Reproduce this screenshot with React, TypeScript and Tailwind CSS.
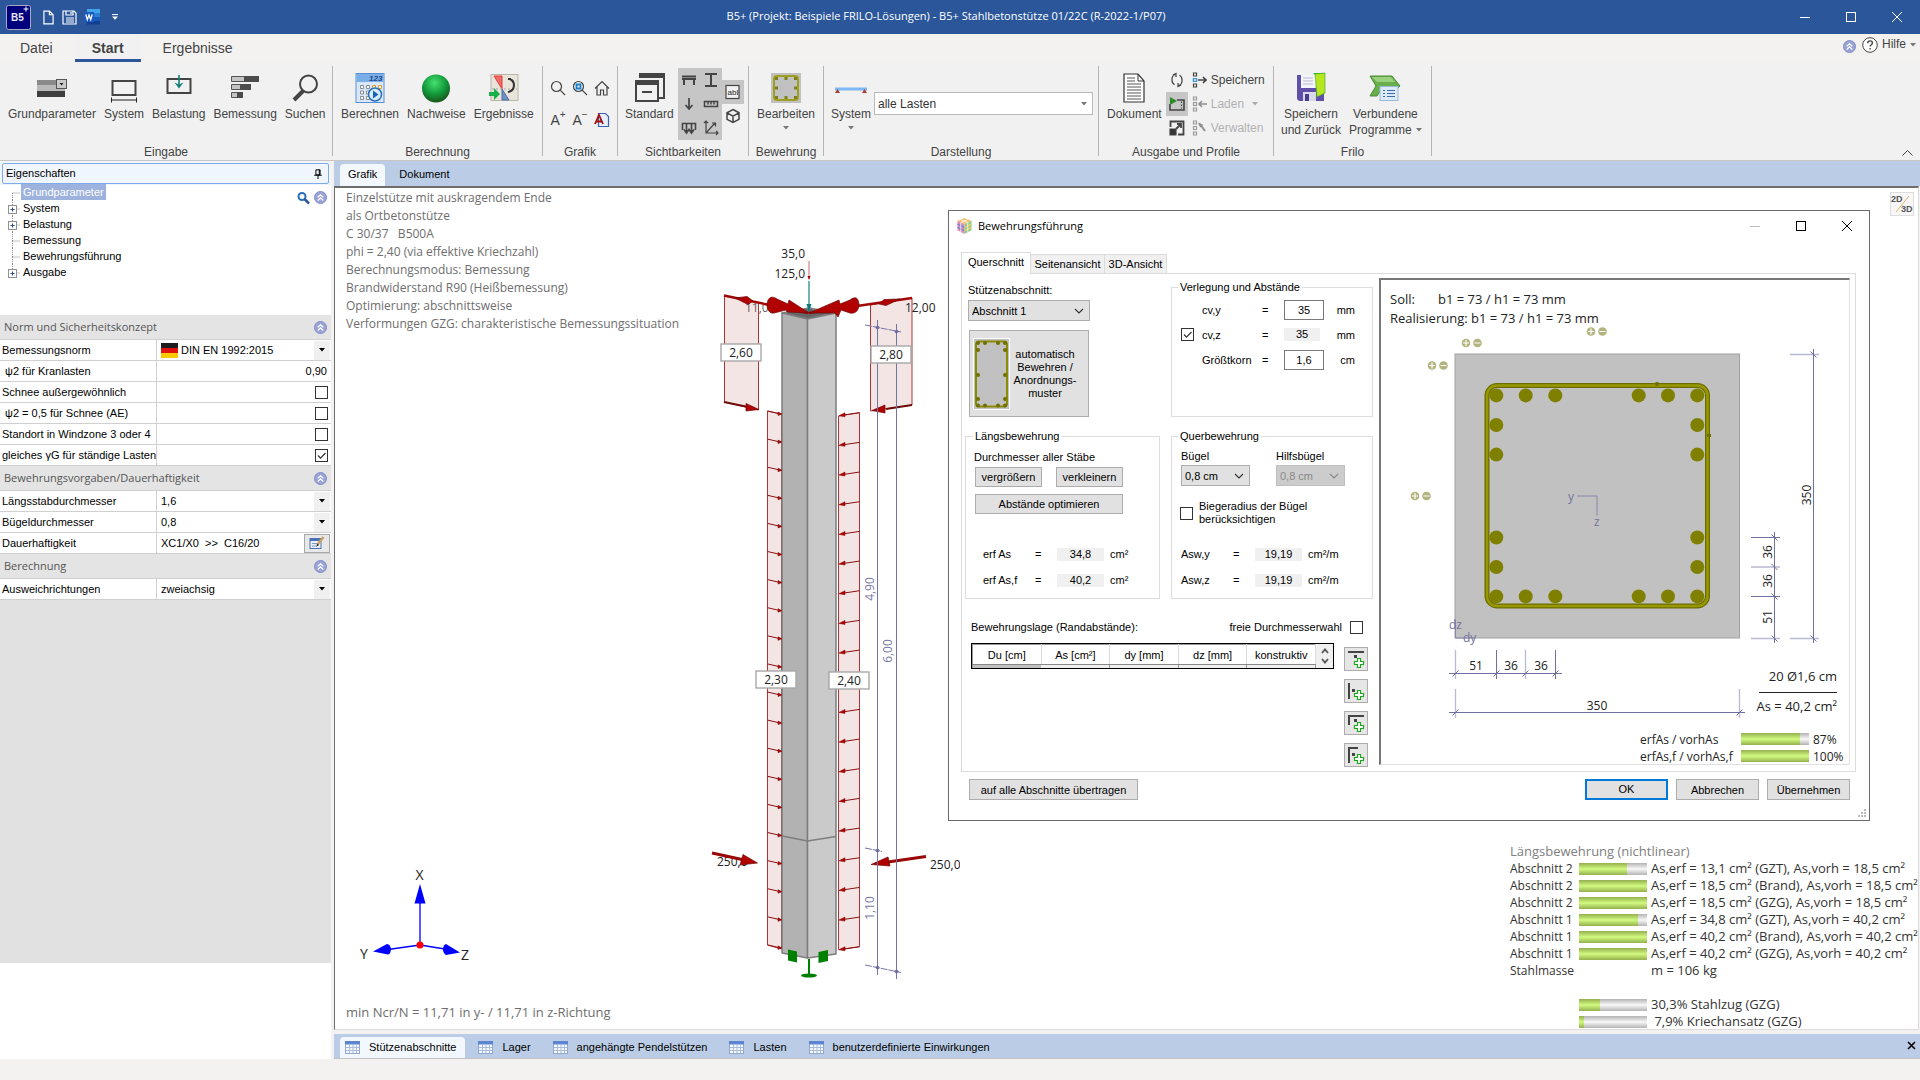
import type { ReactNode } from "react";

/* ---------- small shared pieces ---------- */

function CollapseIcon({ size = 13 }: { size?: number }) {
  return (
    <svg width={size} height={size} viewBox="0 0 14 14">
      <circle cx="7" cy="7" r="6.5" fill="#9aa3d6" stroke="#7f8ac6" strokeWidth="1" />
      <path d="M4 6.8l3-2.8 3 2.8M4 10.2l3-2.8 3 2.8" fill="none" stroke="#fff" strokeWidth="1.3" />
    </svg>
  );
}

function Chevron() {
  return (
    <svg width="10" height="6" viewBox="0 0 10 6" className="pointer-events-none absolute right-1.5">
      <path d="M1 1l4 4 4-4" fill="none" stroke="currentColor" strokeWidth="1.1" />
    </svg>
  );
}

function Caret({ className = "text-[#777]" }: { className?: string }) {
  return (
    <svg width="6" height="4" viewBox="0 0 6 4" className={className}>
      <path d="M0 0h6L3 3.6z" fill="currentColor" />
    </svg>
  );
}

function Check({ id, label, checked }: { id: string; label?: string; checked?: boolean }) {
  return (
    <span className="relative flex h-[13px] w-[13px] shrink-0">
      <input
        id={id}
        type="checkbox"
        aria-label={label}
        defaultChecked={checked}
        className="peer h-[13px] w-[13px] appearance-none border border-[#333] bg-white"
      />
      <svg viewBox="0 0 13 13" className="pointer-events-none absolute inset-0 hidden peer-checked:block">
        <path d="M3 6.5l2.5 2.7L10.5 4" fill="none" stroke="#333" strokeWidth="1.2" />
      </svg>
    </span>
  );
}

function Meter({ value }: { value: number }) {
  return (
    <div className="h-3 w-[68px] bg-linear-to-b from-[#b4b4b4] via-[#f8f8f8] to-[#b4b4b4]">
      <div
        className="h-full bg-linear-to-b from-[#94b04e] via-[#d2fa80] to-[#94b04e]"
        style={{ width: `${value}%` }}
      />
    </div>
  );
}

/* ---------- title bar and ribbon ---------- */

function TitleBar() {
  return (
    <header className="flex h-[34px] shrink-0 items-center bg-[#2b579a] text-white">
      <div className="flex flex-1 items-center pl-1.5">
        <svg width="25" height="25" viewBox="0 0 25 25" className="mr-3">
          <rect x=".5" y=".5" width="24" height="24" rx="2" fill="#00007c" stroke="#a9a9c4" />
          <text x="5" y="16" fontSize="10" fontWeight="700" fill="#e8e8f4" fontFamily="Liberation Sans, sans-serif">B5</text>
          <path d="M20 1.5v5M17.500 4h5" stroke="#fff" strokeWidth="1" />
        </svg>
        <button aria-label="Neu" className="mr-2">
          <svg width="11" height="15" viewBox="0 0 12 16" fill="none" stroke="#fff" strokeWidth="1.3">
            <path d="M1 1h6l4 4v10H1zM7 1v4h4" />
          </svg>
        </button>
        <button aria-label="Speichern" className="mr-[7px]">
          <svg width="15" height="15" viewBox="0 0 15 15" fill="none" stroke="#fff" strokeWidth="1.2">
            <path d="M1 1h11l2 2v11H1zM4 1v4h7V1M9 2v2M4 8h8M4 10h8M4 12h8" />
          </svg>
        </button>
        <button aria-label="Word" className="mr-3">
          <svg width="16" height="16" viewBox="0 0 16 16">
            <path d="M3 0h13v4H3z" fill="#41a5ee" />
            <path d="M3 4h13v4H3z" fill="#2b7cd3" />
            <path d="M3 8h13v4H3z" fill="#185abd" />
            <path d="M3 12h13v3.500H3z" fill="#103f91" />
            <rect y="3" width="10" height="10" fill="#185abd" />
            <path d="M1.800 5.300l1.500 5.400L5 6l1.700 4.700 1.500-5.400" fill="none" stroke="#fff" strokeWidth="1.300" />
          </svg>
        </button>
        <svg width="6" height="6" viewBox="0 0 6 6">
          <path d="M0 .6h6" stroke="#fff" />
          <path d="M0 2.600h6L3 5.800z" fill="#fff" />
        </svg>
      </div>
      <h1 className="pr-4 pb-0.5 font-['Open_Sans',sans-serif] text-[11px] leading-4">
        B5+ (Projekt: Beispiele FRILO-Lösungen) - B5+ Stahlbetonstütze 01/22C (R-2022-1/P07)
      </h1>
      <div className="flex flex-1 items-center justify-end gap-9 pr-[18px]">
        <button aria-label="Minimieren">
          <svg width="10" height="10" viewBox="0 0 10 10"><path d="M0 5.500h10" stroke="#fff" /></svg>
        </button>
        <button aria-label="Maximieren">
          <svg width="10" height="10" viewBox="0 0 10 10"><rect x=".5" y=".5" width="9" height="9" fill="none" stroke="#fff" /></svg>
        </button>
        <button aria-label="Schließen">
          <svg width="10" height="10" viewBox="0 0 10 10"><path d="M0 0l10 10M10 0L0 10" stroke="#fff" /></svg>
        </button>
      </div>
    </header>
  );
}

function RibbonTabs() {
  return (
    <nav className="flex h-7 shrink-0 items-stretch bg-[#f3f2f1] text-sm">
      <a href="#datei" className="px-5 pt-1 text-[#444]">Datei</a>
      <a href="#start" className="ml-0.5 border-b-3 border-[#2b579a] bg-[#f1f1f1] px-[17px] pt-1 font-bold text-[#444]">Start</a>
      <a href="#ergebnisse" className="px-[22px] pt-1 text-[#444]">Ergebnisse</a>
      <div className="flex flex-1 items-start justify-end gap-1.5 pt-0.5 pr-1">
        <button aria-label="Menüband einklappen" className="pt-1"><CollapseIcon /></button>
        <button className="flex items-center gap-1 text-[12px] text-[#444]">
          <svg width="16" height="16" viewBox="0 0 16 16">
            <circle cx="8" cy="8" r="7.300" fill="#fff" stroke="#444" />
            <path d="M5.700 6.200c0-3.200 4.700-3 4.700-.2 0 1.700-2.300 1.800-2.300 3.600M8.100 11v1.500" fill="none" stroke="#444" strokeWidth="1.400" />
          </svg>
          Hilfe <Caret />
        </button>
      </div>
    </nav>
  );
}

function Group({ title, className, children }: { title: string; className: string; children: ReactNode }) {
  return (
    <section className={`flex shrink-0 flex-col ${className}`}>
      <div className="flex flex-1">
        <div className="flex min-w-0 flex-1 flex-col">
          <div className="flex flex-1 items-start">{children}</div>
          <h2 className="text-center text-[12px] leading-4 text-[#444]">{title}</h2>
        </div>
        <div className="my-1 w-px bg-[#b5b5b5]" />
      </div>
    </section>
  );
}

function BigButton({ label, caret, children }: { label: string; caret?: boolean; children: ReactNode }) {
  return (
    <button className="flex flex-col items-center pt-2.5 text-[12px] leading-4 whitespace-nowrap text-[#444]">
      <svg width="32" height="32" viewBox="0 0 32 32">{children}</svg>
      <span className="mt-0.5">{label}</span>
      {caret && <Caret className="mt-1 text-[#777]" />}
    </button>
  );
}

function SmallButton({ label, active, children }: { label: string; active?: boolean; children: ReactNode }) {
  return (
    <button
      aria-label={label}
      className={active ? "flex h-6 w-[22px] items-center justify-center bg-[#c6c6c6]" : "flex h-6 w-[22px] items-center justify-center"}
    >
      <svg width="16" height="16" viewBox="0 0 16 16" fill="none" stroke="#444" strokeWidth="1.2">{children}</svg>
    </button>
  );
}

function ProfileButton({ label, muted, caret, children }: { label: string; muted?: boolean; caret?: boolean; children: ReactNode }) {
  return (
    <button className={muted ? "flex h-6 items-center gap-1 text-[12px] text-[#b1b1b1]" : "flex h-6 items-center gap-1 text-[12px] text-[#444]"}>
      <svg width="15" height="16" viewBox="0 0 15 16" fill="none" stroke="currentColor" strokeWidth="1.2">
        <path d="M1.500 1h3v3h-3zM1.500 6.500h3v3h-3zM1.500 12h3v3h-3z" stroke={muted ? "#9a9a9a" : "#444"} />
        {children}
      </svg>
      {label}
      {caret && <Caret className="ml-1 text-[#aaa]" />}
    </button>
  );
}

function Ribbon() {
  return (
    <div className="flex h-[99px] shrink-0 border-b border-[#c8c6c4] bg-[#f1f1f1]">
      <Group title="Eingabe" className="w-[333px]">
        <div className="flex gap-2 pl-2">
          <BigButton label="Grundparameter">
            <path d="M1 8h20v6H1z" fill="#8a8a8a" />
            <path d="M1 13h28v6H1z" fill="#b9b9b9" />
            <path d="M1 19h28v6H1z" fill="#3f3f3f" />
            <rect x="20.500" y="7.500" width="10" height="9" fill="#c9c9c9" stroke="#555" />
            <path d="M23.500 11h4l-2 2.500z" fill="#222" />
          </BigButton>
          <BigButton label="System">
            <rect x="4.500" y="9" width="23" height="14" fill="none" stroke="#444" strokeWidth="2" />
            <path d="M3.500 25.500v5M28.500 25.500v5M3.500 28h25" fill="none" stroke="#222" />
          </BigButton>
          <BigButton label="Belastung">
            <rect x="4.500" y="7" width="23" height="14" fill="none" stroke="#444" strokeWidth="2" />
            <path d="M16 3v11" stroke="#138080" strokeWidth="1.600" />
            <path d="M11.500 10.500l4.500 6 4.500-6-4.500 2z" fill="#138080" />
          </BigButton>
          <BigButton label="Bemessung">
            <path d="M2.500 4.500h13v5h-13zM2.500 12.500h9v5h-9zM2.500 20.500h6v5h-6z" fill="#c4c4c4" stroke="#555" />
            <path d="M15 4h15v6H15zM11 12h11v6H11zM8 20h6v6H8z" fill="#4c4c4c" />
          </BigButton>
          <BigButton label="Suchen">
            <circle cx="19.500" cy="12" r="8.500" fill="none" stroke="#444" strokeWidth="2" />
            <path d="M14 19L5 28" stroke="#444" strokeWidth="4" />
          </BigButton>
        </div>
      </Group>

      <Group title="Berechnung" className="w-[210px]">
        <div className="flex gap-2 pl-2">
          <BigButton label="Berechnen">
            <rect x="2" y="1.500" width="28" height="29" fill="#d8e8fa" stroke="#5c8fd0" />
            <path d="M2.500 2h27v8h-27z" fill="#7aaee8" />
            <text x="15" y="9" fontSize="8" fontStyle="italic" fontWeight="700" fill="#234a8c" fontFamily="Liberation Sans, sans-serif">123</text>
            <path d="M6.500 13.500h3v3h-3zM12.500 13.500h3v3h-3zM6.500 19h3v3h-3zM12.500 19h3v3h-3zM6.500 24.500h3v3h-3zM12.500 24.500h3v3h-3z" fill="#fff" stroke="#8d8d8d" />
            <path d="M18.500 13.500h3v3h-3zM24.500 13.500h3v3h-3z" fill="#fff" stroke="#e39a2d" />
            <circle cx="21" cy="22.500" r="6.500" fill="#d5ecfb" stroke="#2f6fb5" strokeWidth="1.500" />
            <path d="M19 18.500l5.500 4-5.500 4z" fill="#1a63b0" />
          </BigButton>
          <BigButton label="Nachweise">
            <defs>
              <radialGradient id="ball" cx=".45" cy=".3" r=".75">
                <stop offset="0" stopColor="#45e070" />
                <stop offset=".55" stopColor="#12983a" />
                <stop offset="1" stopColor="#1d4a16" />
              </radialGradient>
            </defs>
            <circle cx="16" cy="16.500" r="14" fill="url(#ball)" />
          </BigButton>
          <BigButton label="Ergebnisse">
            <rect x="3" y="2.500" width="27" height="26" fill="#e9e4da" stroke="#bbb5a8" />
            <path d="M6 4h8v13z" fill="#f06a6a" stroke="#e53b3b" />
            <path d="M14 17v11h7z" fill="#6f8fc0" stroke="#4f70a8" />
            <path d="M4 17h25" stroke="#aaa" strokeDasharray="2 2" />
            <path d="M22 7c6 3 5 12-2 13M20 7h3" fill="none" stroke="#333" strokeWidth="2" />
            <path d="M1 20h5v-4l6 6-6 6v-4H1z" fill="#18b04b" />
          </BigButton>
        </div>
      </Group>

      <Group title="Grafik" className="w-[75px]">
        <div className="grid grid-cols-3 gap-y-2 pt-3.5 pl-1">
          <SmallButton label="Zoom"><circle cx="6.500" cy="6.500" r="5" /><path d="M10.200 10.200L15 15" /></SmallButton>
          <SmallButton label="Zoom Fenster">
            <circle cx="6.500" cy="6.500" r="5" /><path d="M10.200 10.200L15 15" />
            <path d="M4.500 4.500h4v4h-4z" stroke="#1b80d0" strokeWidth="1.800" />
          </SmallButton>
          <SmallButton label="Alles"><path d="M1 8.500L8 1.500l7 7M3 7v8h3.500v-5h3v5H13V7" /></SmallButton>
          <button aria-label="Schrift größer" className="flex h-6 w-[22px] items-center justify-center text-[14px] text-[#444]">A<sup className="text-[10px]">+</sup></button>
          <button aria-label="Schrift kleiner" className="flex h-6 w-[22px] items-center justify-center text-[14px] text-[#444]">A<sup className="text-[10px]">−</sup></button>
          <SmallButton label="Schriftart">
            <path d="M4.500 1.500h7l3 3v10h-10z" fill="#e6effa" stroke="#3d62a8" />
            <path d="M1 12L5 3l4 9M2.500 9.500h5" stroke="#a01010" strokeWidth="1.800" />
          </SmallButton>
        </div>
      </Group>

      <Group title="Sichtbarkeiten" className="w-[131px]">
        <div className="pl-[7px]">
          <BigButton label="Standard">
            <path d="M7 2h24v24H26" fill="none" stroke="#444" strokeWidth="2" />
            <path d="M6 1h25v5H6z" fill="#444" />
            <rect x="3" y="9" width="22" height="20" fill="#f1f1f1" stroke="#444" strokeWidth="2" />
            <path d="M2 8h24v5H2z" fill="#444" />
            <path d="M9 20h10" stroke="#444" strokeWidth="2" />
          </BigButton>
        </div>
        <div className="ml-1 grid grid-cols-2 pt-1.5">
          <SmallButton label="Träger" active><path d="M1 4.500h14M1 7h14M3 7v6M13 7v6" strokeWidth="2" /></SmallButton>
          <SmallButton label="Querschnitt" active><path d="M2 2h12M8 2v12M2 14h12" strokeWidth="2" /></SmallButton>
          <SmallButton label="Lasten" active><path d="M8 2v11M4.500 9L8 13l3.500-4" strokeWidth="1.700" /></SmallButton>
          <SmallButton label="Bemaßung" active><path d="M1.500 5.500h13v5h-13zM5 5.500v3M8 5.500v3M11 5.500v3" strokeWidth="1.500" /></SmallButton>
          <SmallButton label="Auflager" active><path d="M1.500 10V3.500h13V10M5.500 4v8M10.500 4v8M3 9.500L5.500 13 8 9.500l2.500 3.500L13 9.500" strokeWidth="1.600" /></SmallButton>
          <SmallButton label="Achsen" active><path d="M3 1v12h12M3 13L12 3M9 3h3.500v3.500M1 3l2-2 2 2M13 11l2 2-2 2" /></SmallButton>
        </div>
        <div className="flex flex-col pt-[18px]">
          <SmallButton label="Beschriftung" active>
            <rect x="1" y="1.500" width="13" height="13" fill="#f1f1f1" />
            <text x="2.500" y="11" fontSize="8" stroke="none" fill="#222" fontFamily="Liberation Sans, sans-serif">abl</text>
          </SmallButton>
          <SmallButton label="3D"><path d="M8 1.500l6 3.300v6.500L8 14.500l-6-3.200V4.800zM2 4.800l6 3.400 6-3.400M8 8.200v6.300" strokeWidth="1.500" /></SmallButton>
        </div>
      </Group>

      <Group title="Bewehrung" className="w-[75px]">
        <div className="pl-2">
          <BigButton label="Bearbeiten" caret>
            <path d="M1 1h30v30H1z" fill="#c1c1c1" />
            <rect x="4" y="4" width="24" height="24" rx="3" fill="none" stroke="#a0a020" strokeWidth="2" />
            <path d="M5 5h3v3H5zM24 5h3v3h-3zM5 24h3v3H5zM24 24h3v3h-3zM14.500 5h3v3h-3zM14.500 24h3v3h-3zM5 14.500h3v3H5zM24 14.500h3v3h-3z" fill="#80801a" />
          </BigButton>
        </div>
      </Group>

      <Group title="Darstellung" className="w-[275px]">
        <div className="flex items-start gap-[3px] pl-[7px]">
          <BigButton label="System" caret>
            <path d="M0 17h32" stroke="#7db8f5" strokeWidth="3" />
            <path d="M0 21l2.500-4 2.500 4zM27 21l2.500-4 2.500 4z" fill="#b03a2e" />
          </BigButton>
          <div className="relative mt-[30px] flex items-center">
            <select aria-label="Lasten" className="h-[23px] w-[219px] appearance-none border border-[#b9b9b9] bg-white px-[3px] text-[12px] text-[#333]">
              <option>alle Lasten</option>
            </select>
            <Caret className="pointer-events-none absolute right-1.5 text-[#777]" />
          </div>
        </div>
      </Group>

      <Group title="Ausgabe und Profile" className="w-[175px]">
        <div className="pl-2">
          <BigButton label="Dokument">
            <path d="M6 2h14l6 7v21H6z" fill="#fff" stroke="#333" strokeWidth="1.200" />
            <path d="M20 2v7h6" fill="none" stroke="#333" />
            <path d="M9 6h8M9 9h8M9 12h14M9 15h14M9 18h14M9 21h14M9 24h14M9 27h14" stroke="#555" />
          </BigButton>
        </div>
        <div className="flex flex-col pt-1.5 pl-1">
          <SmallButton label="Aktualisieren"><path d="M6 2.500C2 4 2 11 5.500 12.800M10 13.500C14 12 14 5 10.500 3.200M4 3l3-1.500V5M12 13l-3 1.500V11" /></SmallButton>
          <SmallButton label="Vorschau" active>
            <path d="M1 8v6h14V4H8" strokeWidth="1.600" />
            <path d="M12.500 5.500v7" strokeDasharray="1.500 1.500" />
            <path d="M1 1l7 4-7 4z" fill="#2b8a2b" stroke="none" />
          </SmallButton>
          <SmallButton label="Vergrößern">
            <path d="M1.500 7V1.500h13v13H9" strokeWidth="1.800" /><path d="M1 9h6v6H1z" fill="#333" /><path d="M7 9l5-5M8 4h4v4" strokeWidth="1.800" />
          </SmallButton>
        </div>
        <div className="flex flex-col pt-1.5 pl-1">
          <ProfileButton label="Speichern"><path d="M6 8h8M11 5l3 3-3 3" strokeWidth="1.600" /><path d="M1.500 6.500h3v3h-3z" stroke="#2b9fe0" /></ProfileButton>
          <ProfileButton label="Laden" muted caret><path d="M7 8h8M10 5L7 8l3 3" stroke="#8f8f8f" strokeWidth="1.600" /></ProfileButton>
          <ProfileButton label="Verwalten" muted><path d="M8 4l5 7M7 3l1.500 3 2-1.500" stroke="#8f8f8f" strokeWidth="2" /></ProfileButton>
        </div>
      </Group>

      <Group title="Frilo" className="w-[158px]">
        <div className="flex gap-2 pl-[7px]">
          <button className="flex flex-col items-center pt-2.5 text-[12px] leading-4 text-[#444]">
            <svg width="32" height="32" viewBox="0 0 32 32">
              <path d="M2 3h27v26H4l-2-2z" fill="#5f4fa8" />
              <path d="M6 3h15v13H6z" fill="#f4f4fb" />
              <path d="M8 6h10M8 9h10M8 12h10" stroke="#b9b9d4" />
              <path d="M8 20h13v9H8z" fill="#d9d9ea" />
              <path d="M10 22h4v7h-4z" fill="#4a3c90" />
              <path d="M18 1h12v20l-6 2V6z" fill="#1fb53a" />
              <path d="M20 2l10-1v20l-8 4z" fill="#b6e61d" stroke="#3aa028" strokeWidth=".6" />
            </svg>
            <span className="mt-0.5">Speichern</span>
            <span>und Zurück</span>
          </button>
          <button className="flex flex-col items-center pt-2.5 text-[12px] leading-4 text-[#444]">
            <svg width="32" height="32" viewBox="0 0 32 32">
              <path d="M1 4h22l8 10-4 4H12l-4 6H1l6-10z" fill="#69b04a" stroke="#4a8a34" />
              <path d="M3 5h19l4 5H8z" fill="#9ad07e" />
              <rect x="11" y="14.500" width="18" height="14" fill="#dbe9f8" stroke="#9ab8da" />
              <path d="M14 18.500h2M14 21.500h2M14 24.500h2M18 18.500h8M18 21.500h8M18 24.500h8" stroke="#3c6ca8" />
            </svg>
            <span className="mt-0.5">Verbundene</span>
            <span className="flex items-center gap-1">Programme <Caret /></span>
          </button>
        </div>
      </Group>

      <div className="flex flex-1 items-end justify-end pr-[7px] pb-1">
        <button aria-label="Menüband reduzieren">
          <svg width="11" height="6" viewBox="0 0 11 6"><path d="M.5 5.500l5-5 5 5" fill="none" stroke="#444" /></svg>
        </button>
      </div>
    </div>
  );
}

/* ---------- properties panel ---------- */

const tree = [
  { name: "Grundparameter", selected: true },
  { name: "System", children: true },
  { name: "Belastung", children: true },
  { name: "Bemessung" },
  { name: "Bewehrungsführung" },
  { name: "Ausgabe", children: true },
];

function Section({ title }: { title: string }) {
  return (
    <div className="flex h-[25px] items-center justify-between border-b border-[#d0d0d0] bg-[#e4e4e4] pr-1 pl-1">
      <h3 className="font-['Open_Sans',sans-serif] text-[11px] text-[#555]">{title}</h3>
      <button aria-label={`${title} einklappen`}><CollapseIcon /></button>
    </div>
  );
}

function Row({ id, label, children }: { id: string; label: string; children: ReactNode }) {
  return (
    <div className="flex h-[21px] border-b border-[#d0d0d0] bg-white">
      <label htmlFor={id} className="w-[156px] shrink-0 pl-0.5 leading-5 whitespace-pre">{label}</label>
      <div className="flex min-w-0 flex-1 items-center border-l border-[#d0d0d0]">{children}</div>
    </div>
  );
}

function RowSelect({ id, value, flag }: { id: string; value: string; flag?: boolean }) {
  return (
    <div className="flex h-full w-full items-center pl-1">
      {flag && (
        <svg width="17" height="15" viewBox="0 0 17 15" className="mr-[3px] shrink-0">
          <path d="M0 0h17v5H0z" fill="#1c1c1c" />
          <path d="M0 5h17v5H0z" fill="#dd1010" />
          <path d="M0 10h17v5H0z" fill="#f8c800" />
        </svg>
      )}
      <select id={id} className="min-w-0 flex-1 appearance-none bg-transparent pt-px"><option>{value}</option></select>
      <span className="mr-px flex h-[19px] w-4 items-center justify-center bg-[#f0f0f0]"><Caret className="text-black" /></span>
    </div>
  );
}

function Properties() {
  return (
    <aside className="flex w-[331px] shrink-0 flex-col bg-[#f0f5fc] text-[11px] text-black">
      <div className="mx-0.5 mt-0.5 mb-px flex h-[21px] items-center justify-between rounded-xs border border-[#7fabe8] bg-[#eff6fe] pr-1.5 pl-[3px]">
        <h2>Eigenschaften</h2>
        <svg width="8" height="10" viewBox="0 0 9 12" fill="none" stroke="#000" strokeWidth="1.200">
          <path d="M2 1h5v6H2zM0 7.500h9M4.500 8v4M6 1v6" />
        </svg>
      </div>
      <div className="flex h-[130px] shrink-0 justify-between bg-white">
        <ul className="-mt-px">
          {tree.map((item) => (
            <li key={item.name} className="flex h-4 items-center">
              <svg width="21" height="16" viewBox="0 0 21 16">
                <path d="M12.500 9v-9M12.500 9h8" stroke="#888" strokeDasharray="1 1" className={item.selected ? "hidden" : ""} />
                <path d="M12.500 9v7" stroke="#888" strokeDasharray="1 1" className={item.name === "Ausgabe" ? "hidden" : ""} />
                {item.selected && <path d="M12.500 9h8" stroke="#888" strokeDasharray="1 1" />}
                {item.children && (
                  <g>
                    <rect x="8.500" y="5.500" width="8" height="8" fill="#fff" stroke="#919191" />
                    <path d="M10.500 9.500h4M12.500 7.500v4" stroke="#2a4a9a" />
                  </g>
                )}
              </svg>
              <span className={item.selected ? "bg-[#9db2dc] pr-0.5 pl-0.5 leading-4 text-white" : "pl-0.5 leading-4"}>{item.name}</span>
            </li>
          ))}
        </ul>
        <div className="flex items-start gap-1 pt-1.5 pr-1">
          <button aria-label="Suchen">
            <svg width="13" height="14" viewBox="0 0 13 14">
              <circle cx="5" cy="5.500" r="3.500" fill="none" stroke="#2a6cb8" strokeWidth="2" />
              <path d="M7.500 8l4.500 4.500" stroke="#2a5a9c" strokeWidth="2.500" />
            </svg>
          </button>
          <button aria-label="Alle einklappen"><CollapseIcon /></button>
        </div>
      </div>

      <Section title="Norm und Sicherheitskonzept" />
      <Row id="norm" label="Bemessungsnorm"><RowSelect id="norm" value="DIN EN 1992:2015" flag /></Row>
      <Row id="kran" label=" ψ2 für Kranlasten"><input id="kran" defaultValue="0,90" className="w-full pr-1 text-right" /></Row>
      <Row id="schnee" label="Schnee außergewöhnlich"><div className="ml-auto pr-[3px]"><Check id="schnee" /></div></Row>
      <Row id="ae" label=" ψ2 = 0,5 für Schnee (AE)"><div className="ml-auto pr-[3px]"><Check id="ae" /></div></Row>
      <Row id="wind" label="Standort in Windzone 3 oder 4"><div className="ml-auto pr-[3px]"><Check id="wind" /></div></Row>
      <Row id="gamma" label="gleiches γG für ständige Lasten"><div className="ml-auto pr-[3px]"><Check id="gamma" checked /></div></Row>

      <Section title="Bewehrungsvorgaben/Dauerhaftigkeit" />
      <Row id="laengs" label="Längsstabdurchmesser"><RowSelect id="laengs" value="1,6" /></Row>
      <Row id="buegel" label="Bügeldurchmesser"><RowSelect id="buegel" value="0,8" /></Row>
      <Row id="dauer" label="Dauerhaftigkeit">
        <input id="dauer" defaultValue="XC1/X0  >>  C16/20" className="min-w-0 flex-1 pl-1" />
        <button aria-label="Dauerhaftigkeit bearbeiten" className="mr-px flex h-[19px] w-[26px] items-center justify-center border border-[#a8a8a8] bg-[#e8e8e8]">
          <svg width="16" height="14" viewBox="0 0 16 14">
            <rect x="1" y="2.500" width="11" height="10" fill="#eaf1fb" stroke="#4a72b8" />
            <path d="M1 2.500h11v2.500H1z" fill="#4a72b8" />
            <path d="M3 7.500h5M3 10h4" stroke="#7a9bd0" />
            <path d="M14.500 1L8 9" stroke="#c8a060" strokeWidth="2.500" />
            <path d="M8.500 7.500L7 11l3-2z" fill="#333" />
          </svg>
        </button>
      </Row>

      <Section title="Berechnung" />
      <Row id="ausweich" label="Ausweichrichtungen"><RowSelect id="ausweich" value="zweiachsig" /></Row>
      <div className="flex-1 bg-[#e1e1e1]" />
      <div className="h-24 bg-white" />
    </aside>
  );
}

/* ---------- 3D view of the column ---------- */

const leftLoads = Array.from({ length: 20 }, (_, i) => 411 + i * 28.1);
const rightLoads = Array.from({ length: 19 }, (_, i) => 412.7 + i * 29.67);

function LoadLabel({ x, y, text }: { x: number; y: number; text: string }) {
  return (
    <g>
      <rect x={x} y={y} width="40" height="17" fill="#fff" stroke="#a8a8a8" strokeWidth="1.400" />
      <text x={x + 20} y={y + 13} textAnchor="middle">{text}</text>
    </g>
  );
}

function ColumnView() {
  return (
    <svg
      className="absolute top-[52px] left-[15px] h-[750px] w-[610px] font-['Open_Sans',sans-serif] text-[12px]"
      viewBox="350 240 610 750"
      fill="#222"
    >
      {/* area loads */}
      <g fill="#f4e5e5" stroke="#b03434" strokeWidth="1">
        <path d="M724.500 296l34 7v107l-34-8z" />
        <path d="M870.500 305l41.500-7v107l-41.500 6z" />
        <path d="M767.500 411l14 3v535l-14-4z" />
        <path d="M838.500 416l21-3.300v534l-21 3z" />
      </g>

      {/* labels that lie behind the arrows */}
      <text x="745" y="312" fill="#666">11,00</text>
      <text x="905" y="312">12,00</text>
      <text x="717" y="866">250,0</text>
      <text x="930" y="869">250,0</text>
      <text x="805" y="258" textAnchor="end">35,0</text>
      <text x="805" y="278" textAnchor="end">125,0</text>

      {/* column body */}
      <g stroke="#7e7e7e" strokeWidth="1.500" strokeLinejoin="round">
        <path d="M782 313l27-5 27 5-28.500 6z" fill="#666" />
        <path d="M782 313l25.500 6v639L782 953z" fill="#b2b2b2" />
        <path d="M836 313l-28.500 6v639l28.500-4z" fill="#cacaca" />
        <path d="M782 836l25.500 5 28.500-4.500" fill="none" />
      </g>

      {/* wind load arrows */}
      <g stroke="#8a1010" fill="#b00000">
        {leftLoads.map((y) => (
          <g key={y}>
            <path d={`M767.500 ${y}l13 3`} />
            <path d={`M778 ${y + 1}l4 2-4 1.500z`} strokeWidth=".6" />
          </g>
        ))}
        {rightLoads.map((y) => (
          <g key={y}>
            <path d={`M859.500 ${y}l-18 2.700`} />
            <path d={`M839 ${y + 3}l6-3v4z`} strokeWidth=".6" />
          </g>
        ))}
      </g>

      {/* large red arrows */}
      <g fill="#b00000" stroke="#6e0a0a" strokeWidth=".7">
        <path d="M724 295.500l84 17.500" strokeWidth="2.400" stroke="#a00808" />
        <path d="M912 298l-103 15" strokeWidth="2.400" stroke="#a00808" />
        <path d="M735 298l12-1.500 6 4.500-5 3.500z" />
        <path d="M767 304c1-8 6-8 10-5l11 5 1-4 20 13-22-1-1-2-12 3c-4 1-7-3-7-9z" />
        <path d="M900 299l-16 .5-5 4.500 7 1.500z" />
        <path d="M859 304c-1-8-5-7-9-4l-10 4-1-4-30 13 26 0 3 4 3-7 9 3c5 1 9-2 9-9z" />
        <path d="M724 402l24 5" strokeWidth="2" />
        <path d="M746 403.500l13 6-13 1.500z" />
        <path d="M912 405l-26 4" strokeWidth="2" />
        <path d="M872 410.500l13-5.500v8z" />
        <path d="M712 853l30 6.500" stroke="#9a0808" strokeWidth="3" />
        <path d="M743 854.500l14.500 8.500-17.500 2z" />
        <path d="M926 856.500l-38 5.500" stroke="#9a0808" strokeWidth="3" />
        <path d="M871 864.500l17-7.500 2 9z" />
      </g>

      {/* vertical load */}
      <path d="M809 261v18" stroke="#c07070" />
      <path d="M807.500 276h3l-1.500 4z" fill="#b00000" />
      <path d="M809 281v24" stroke="#138080" strokeWidth="1.200" />
      <path d="M806.500 304h5l-2.500 8z" fill="#0f7a7a" />

      {/* dimensions */}
      <g stroke="#7474a4" fill="#6a6a9c">
        <path d="M877.500 320v655M896.500 324v655" />
        <path d="M865 325l36 7M865 848l17 3.500M865 965l36 7.500" fill="none" strokeDasharray="7 1" />
        <circle cx="877.500" cy="327.500" r="1.500" />
        <circle cx="896.500" cy="331.500" r="1.500" />
        <circle cx="877.500" cy="850.500" r="1.500" />
        <circle cx="877.500" cy="967.500" r="1.500" />
        <circle cx="896.500" cy="971.500" r="1.500" />
      </g>
      <g fill="#7878a8" textAnchor="middle">
        <text transform="translate(874 589) rotate(-90)">4,90</text>
        <text transform="translate(892 651) rotate(-90)">6,00</text>
        <text transform="translate(874 908) rotate(-90)">1,10</text>
      </g>

      <LoadLabel x={721} y={344} text="2,60" />
      <LoadLabel x={871} y={346} text="2,80" />
      <LoadLabel x={756} y={671} text="2,30" />
      <LoadLabel x={829} y={672} text="2,40" />

      {/* support */}
      <g fill="#008000">
        <path d="M788 949.500l9 2v11l-9-2zM818.500 952l9.500-2v11l-9.500 2z" />
        <path d="M808 959h2v16h-2z" />
        <ellipse cx="809" cy="975.500" rx="8" ry="2" />
      </g>

      {/* axes */}
      <g stroke="#0000ff" fill="#0000ff">
        <path d="M420 945v-45M420 945l-32 4.500M420 945l28 4.500" strokeWidth="1.300" />
        <path d="M420 884l5.500 19.500h-11z" stroke="none" />
        <path d="M373 951.500l14-7.500c5 0 5 10 1 10.500z" stroke="none" />
        <path d="M460 952.500l-14-8.500c-4 1-4 9 0 11z" stroke="none" />
      </g>
      <circle cx="420" cy="945" r="3.500" fill="#ff0000" />
      <g className="text-[14px]" textAnchor="middle" fill="#222">
        <text x="419.500" y="880">X</text>
        <text x="364" y="959">Y</text>
        <text x="465" y="960">Z</text>
      </g>
    </svg>
  );
}

const results = [
  { name: "Abschnitt 2", value: 71, text: "As,erf = 13,1 cm² (GZT), As,vorh = 18,5 cm²" },
  { name: "Abschnitt 2", value: 100, text: "As,erf = 18,5 cm² (Brand), As,vorh = 18,5 cm²" },
  { name: "Abschnitt 2", value: 100, text: "As,erf = 18,5 cm² (GZG), As,vorh = 18,5 cm²" },
  { name: "Abschnitt 1", value: 87, text: "As,erf = 34,8 cm² (GZT), As,vorh = 40,2 cm²" },
  { name: "Abschnitt 1", value: 100, text: "As,erf = 40,2 cm² (Brand), As,vorh = 40,2 cm²" },
  { name: "Abschnitt 1", value: 100, text: "As,erf = 40,2 cm² (GZG), As,vorh = 40,2 cm²" },
  { name: "Stahlmasse", text: "m = 106 kg" },
  { name: "", text: "" },
  { name: "", value: 30.3, text: "30,3% Stahlzug (GZG)" },
  { name: "", value: 7.9, text: " 7,9% Kriechansatz (GZG)" },
];

function Results() {
  return (
    <div className="absolute right-0 -bottom-px w-[408px] font-['Open_Sans',sans-serif] text-[12px] leading-[17px] whitespace-pre text-[#333]">
      <p className="text-[13px] text-[#808080]">Längsbewehrung (nichtlinear)</p>
      {results.map((r, i) => (
        <div key={i} className="flex h-[17px] items-center">
          <span className="w-[69px] shrink-0">{r.name}</span>
          <span className="w-[72px] shrink-0">{r.value !== undefined && <Meter value={r.value} />}</span>
          <span className="text-[13px]">{r.text}</span>
        </div>
      ))}
    </div>
  );
}

/* ---------- reinforcement dialog ---------- */

function DialogSelect({ id, value, disabled, className }: { id: string; value: string; disabled?: boolean; className: string }) {
  return (
    <span className={`relative flex items-center ${disabled ? "text-[#888]" : "text-[#333]"} ${className}`}>
      <select
        id={id}
        disabled={disabled}
        className={`h-[21px] w-full appearance-none border px-[3px] ${disabled ? "border-[#bfbfbf] bg-[#ccc]" : "border-[#adadad] bg-[#e1e1e1] text-black"}`}
      >
        <option>{value}</option>
      </select>
      <Chevron />
    </span>
  );
}

function PushButton({ className, children }: { className: string; children: ReactNode }) {
  return <button className={`border border-[#adadad] bg-[#e1e1e1] ${className}`}>{children}</button>;
}

function ValueRow({ label, value, unit }: { label: string; value: string; unit: string }) {
  return (
    <div className="flex h-[26px] items-center">
      <span className="w-[52px]">{label}</span>
      <span className="w-[22px]">=</span>
      <output className="h-[13px] w-[47px] bg-[#f0f0f0] text-center leading-[13px]">{value}</output>
      <span className="pl-1.5">{unit}</span>
    </div>
  );
}

function CoverRow({ id, label, unit, check, children }: { id: string; label: string; unit: string; check?: boolean; children: ReactNode }) {
  return (
    <div className="flex h-[25px] items-center pl-[9px]">
      <span className="w-[21px]">{check && <Check id="cvz-check" label="cv,z" checked />}</span>
      <label htmlFor={id} className="w-[60px]">{label}</label>
      <span className="w-[22px]">=</span>
      <span className="w-10">{children}</span>
      <span className="w-[31px] text-right">{unit}</span>
    </div>
  );
}

const barX = [1496.3, 1525.7, 1555.3, 1638.7, 1668, 1697.3];
const sideY = [425, 454.6, 537.5, 567];
const toggles = [[1466, 343], [1591, 331.5], [1432, 365.5], [1415, 496]];

function CrossSection() {
  return (
    <svg className="h-[484px] w-full font-['Open_Sans',sans-serif] text-[12px]" viewBox="1381 280 468 484" preserveAspectRatio="xMinYMin" fill="#222">
      <defs>
        <linearGradient id="meterBg" x1="0" y1="0" x2="0" y2="1">
          <stop offset="0" stopColor="#b4b4b4" /><stop offset=".5" stopColor="#f8f8f8" /><stop offset="1" stopColor="#b4b4b4" />
        </linearGradient>
        <linearGradient id="meterFill" x1="0" y1="0" x2="0" y2="1">
          <stop offset="0" stopColor="#94b04e" /><stop offset=".5" stopColor="#d2fa80" /><stop offset="1" stopColor="#94b04e" />
        </linearGradient>
      </defs>

      <g className="text-[13px]">
        <text x="1390" y="304">Soll:</text>
        <text x="1438" y="304">b1 = 73 / h1 = 73 mm</text>
        <text x="1390" y="323">Realisierung: b1 = 73 / h1 = 73 mm</text>
      </g>

      <rect x="1455" y="354" width="284.500" height="284" fill="#c1c1c1" stroke="#a2a2a2" />
      <rect x="1487" y="385.500" width="220.500" height="220.500" rx="10" fill="none" stroke="#6c6c00" strokeWidth="5" />
      <rect x="1487" y="385.500" width="220.500" height="220.500" rx="10" fill="none" stroke="#989800" strokeWidth="2.500" />
      <path d="M1655.500 382h3v4h-3zM1707 434h4v3h-4z" fill="#707000" />

      <g fill="#808000">
        {barX.map((x) => <circle key={x} cx={x} cy="395.400" r="7" />)}
        {barX.map((x) => <circle key={x} cx={x} cy="596.400" r="7" />)}
        {sideY.map((y) => <circle key={y} cx="1496.300" cy={y} r="7" />)}
        {sideY.map((y) => <circle key={y} cx="1697.300" cy={y} r="7" />)}
      </g>

      {toggles.map(([x, y]) => (
        <g key={x} stroke="#fff" strokeWidth="1.200">
          <circle cx={x} cy={y} r="4.300" fill="#b3b37e" stroke="none" />
          <circle cx={x + 11.500} cy={y} r="4.300" fill="#b3b37e" stroke="none" />
          <path d={`M${x - 3} ${y}h6M${x} ${y - 3}v6M${x + 8.500} ${y}h6`} />
        </g>
      ))}

      {/* local axes */}
      <path d="M1577 496h20v19.500M1455.500 620v18h20" fill="none" stroke="#8888ac" />
      <g fill="#7474a0">
        <text x="1568" y="501">y</text>
        <text x="1594" y="526">z</text>
        <text x="1449" y="629">dz</text>
        <text x="1463" y="642">dy</text>
      </g>

      {/* dimension lines */}
      <g stroke="#b9b9d2" strokeWidth="1.300">
        <path d="M1790 354.500h29M1790 638.500h29M1751 567h29M1751 638.500h29M1455.500 650v29M1525.500 650v29M1455.500 689v29M1739.500 689v29" />
      </g>
      <g stroke="#7070a0">
        <path d="M1813.500 349v294M1774.500 532v111M1751 537.500h29M1751 596.500h29M1449 673.500h113M1449 712.500h296M1496.500 650v29M1555.500 650v29" />
        <path d="M1810.500 351.500l6 6M1810.500 635.500l6 6M1771.500 534.500l6 6M1771.500 564l6 6M1771.500 593.500l6 6M1771.500 635.500l6 6M1452.500 676.500l6-6M1493.500 676.500l6-6M1522.500 676.500l6-6M1552.500 676.500l6-6M1452.500 715.500l6-6M1736.500 715.500l6-6" />
      </g>
      <g textAnchor="middle">
        <text x="1476" y="670">51</text>
        <text x="1511" y="670">36</text>
        <text x="1541" y="670">36</text>
        <text x="1597" y="710">350</text>
        <text transform="translate(1811 495) rotate(-90)">350</text>
        <text transform="translate(1772 552) rotate(-90)">36</text>
        <text transform="translate(1772 581) rotate(-90)">36</text>
        <text transform="translate(1772 617) rotate(-90)">51</text>
      </g>

      <g textAnchor="end" className="text-[13px]">
        <text x="1837" y="681">20 Ø1,6 cm</text>
        <text x="1837" y="711">As = 40,2 cm²</text>
      </g>
      <path d="M1759 692.500h78" stroke="#222" />

      <text x="1640" y="744">erfAs / vorhAs</text>
      <text x="1640" y="761">erfAs,f / vorhAs,f</text>
      <rect x="1741" y="733" width="68" height="12" fill="url(#meterBg)" />
      <rect x="1741" y="733" width="59" height="12" fill="url(#meterFill)" />
      <rect x="1741" y="750" width="68" height="12" fill="url(#meterFill)" />
      <text x="1813" y="744">87%</text>
      <text x="1813" y="761">100%</text>
    </svg>
  );
}

const layerButtons = [
  { label: "Lage oben", line: "M1 2h16", dot: "M7 5h3v3H7z" },
  { label: "Lage links", line: "M2 1v16", dot: "M5 7h3v3H5z" },
  { label: "Ecke oben", line: "M2 11V2h15", dot: "M7 5h3v3H7z" },
  { label: "Ecke links", line: "M11 2H2v15", dot: "M5 7h3v3H5z" },
];

function Dialog() {
  return (
    <div
      role="dialog"
      aria-label="Bewehrungsführung"
      className="absolute top-[22px] right-[48px] flex h-[611px] w-[922px] flex-col border border-[#6a6a6a] bg-white text-[11px] leading-4 text-black"
    >
      <div className="flex h-[30px] items-center pl-2">
        <svg width="15" height="16" viewBox="0 0 16 17">
          <path d="M8 0l7.500 3-7.500 3.500L.5 3z" fill="#f3c070" />
          <path d="M.5 3L8 6.500V17L.5 13z" fill="#e08ab0" />
          <path d="M15.500 3L8 6.500V17l7.500-4z" fill="#8fc890" />
          <path d="M.5 6.500L8 10M.5 10L8 13.500" stroke="#6f88d8" strokeWidth="1.500" />
          <path d="M15.500 6.500L8 10M15.500 10L8 13.500" stroke="#f0d060" strokeWidth="1.500" />
          <path d="M4 1.500l7.500 3.500M11.500 1.500L4 5M4 5v10M11.500 5v10" stroke="#fff" strokeWidth=".8" />
        </svg>
        <h2 className="flex-1 pl-1.5 font-['Open_Sans',sans-serif]">Bewehrungsführung</h2>
        <div className="flex gap-9 pr-[17px]">
          <button aria-label="Minimieren"><svg width="10" height="10" viewBox="0 0 10 10"><path d="M0 5.500h10" stroke="#bbb" /></svg></button>
          <button aria-label="Maximieren"><svg width="10" height="10" viewBox="0 0 10 10"><rect x=".5" y=".5" width="9" height="9" fill="none" stroke="#000" /></svg></button>
          <button aria-label="Schließen"><svg width="10" height="10" viewBox="0 0 10 10"><path d="M0 0l10 10M10 0L0 10" stroke="#000" /></svg></button>
        </div>
      </div>

      <div role="tablist" className="mt-[11px] flex items-end pl-3">
        <button role="tab" aria-selected className="relative z-10 -mb-px h-[22px] w-[70px] border border-b-0 border-[#dcdcdc] bg-white pb-1">Querschnitt</button>
        <button role="tab" className="h-[19px] w-[74px] border-t border-r border-[#dcdcdc] bg-[#f0f0f0]">Seitenansicht</button>
        <button role="tab" className="h-[19px] w-[62px] border-t border-r border-[#dcdcdc] bg-[#f0f0f0]">3D-Ansicht</button>
      </div>

      <div className="mr-[13px] ml-3 flex h-[499px] border border-[#dcdcdc]">
        <div className="w-[411px] shrink-0">
          <div className="flex h-[143px]">
            <div className="w-[209px] pt-2 pl-1.5">
              <label htmlFor="abschnitt" className="block">Stützenabschnitt:</label>
              <div className="mt-0.5"><DialogSelect id="abschnitt" value="Abschnitt 1" className="w-[122px]" /></div>
              <PushButton className="mt-[9px] ml-px flex h-[87px] w-[120px] items-center gap-0.5 pl-[3px] leading-[13px]">
                <svg width="37" height="72" viewBox="0 0 37 72" className="shrink-0">
                  <rect x=".5" y=".5" width="36" height="71" fill="#c1c1c1" stroke="#fff" />
                  <rect x="3" y="3.500" width="31" height="65" rx="3" fill="none" stroke="#8c8c00" strokeWidth="2" />
                  <g fill="#707000">
                    {[5, 12, 37, 61, 67.5].map((y) => (
                      <g key={y}><circle cx="5" cy={y} r="2" /><circle cx="32" cy={y} r="2" /></g>
                    ))}
                    {[12, 25].map((x) => (
                      <g key={x}><circle cx={x} cy="5" r="2" /><circle cx={x} cy="67.500" r="2" /></g>
                    ))}
                  </g>
                </svg>
                <span className="w-[66px]">automatisch Bewehren / Anordnungs-<br />muster</span>
              </PushButton>
            </div>
            <fieldset className="mt-[5px] h-[138px] w-[202px] border border-[#dcdcdc] pt-0.5">
              <legend className="ml-1.5 px-0.5">Verlegung und Abstände</legend>
              <CoverRow id="cvy" label="cv,y" unit="mm">
                <input id="cvy" defaultValue="35" className="h-5 w-10 border border-[#7a7a7a] text-center" />
              </CoverRow>
              <CoverRow id="cvz" label="cv,z" unit="mm" check>
                <output id="cvz" className="block h-[13px] w-9 bg-[#f0f0f0] text-center leading-[13px]">35</output>
              </CoverRow>
              <CoverRow id="korn" label="Größtkorn" unit="cm">
                <input id="korn" defaultValue="1,6" className="h-5 w-10 border border-[#7a7a7a] text-center" />
              </CoverRow>
            </fieldset>
          </div>

          <div className="mt-[11px] flex justify-between pl-[3px]">
            <fieldset className="h-[171px] w-[195px] border border-[#dcdcdc] pl-2">
              <legend className="-ml-px px-0.5">Längsbewehrung</legend>
              <p className="pt-[5px]">Durchmesser aller Stäbe</p>
              <div className="flex gap-3.5 pt-0.5 pl-px">
                <PushButton className="h-5 w-[67px]">vergrößern</PushButton>
                <PushButton className="h-5 w-[67px]">verkleinern</PushButton>
              </div>
              <PushButton className="mt-[7px] ml-px h-5 w-[148px]">Abstände optimieren</PushButton>
              <div className="pt-[27px] pl-[9px]">
                <ValueRow label="erf As" value="34,8" unit="cm²" />
                <ValueRow label="erf As,f" value="40,2" unit="cm²" />
              </div>
            </fieldset>
            <fieldset className="h-[171px] w-[202px] border border-[#dcdcdc] pl-2">
              <legend className="-ml-0.5 px-0.5">Querbewehrung</legend>
              <div className="flex gap-[26px] pt-1 pl-px">
                <div>
                  <label htmlFor="buegel-d" className="mb-px block">Bügel</label>
                  <DialogSelect id="buegel-d" value="0,8 cm" className="w-[69px]" />
                </div>
                <div>
                  <label htmlFor="hilfs-d" className="mb-px block">Hilfsbügel</label>
                  <DialogSelect id="hilfs-d" value="0,8 cm" className="w-[69px]" disabled />
                </div>
              </div>
              <div className="mt-3.5 flex items-center gap-1.5 leading-[13px]">
                <Check id="biege" />
                <label htmlFor="biege">Biegeradius der Bügel<br />berücksichtigen</label>
              </div>
              <div className="pt-[15px] pl-px">
                <ValueRow label="Asw,y" value="19,19" unit="cm²/m" />
                <ValueRow label="Asw,z" value="19,19" unit="cm²/m" />
              </div>
            </fieldset>
          </div>

          <div className="flex items-center justify-between pt-5 pr-2.5 pl-[9px]">
            <span>Bewehrungslage (Randabstände):</span>
            <span className="flex items-center gap-2">
              <label htmlFor="frei">freie Durchmesserwahl</label>
              <Check id="frei" />
            </span>
          </div>

          <div className="flex justify-between pt-2 pr-1 pl-[9px]">
            <div className="flex h-[26px] w-[363px] overflow-hidden border border-black">
              <table className="h-full w-[344px] table-fixed border-collapse border-t border-l border-[#999]">
                <thead>
                  <tr>
                    {["Du [cm]", "As [cm²]", "dy [mm]", "dz [mm]", "konstruktiv"].map((h) => (
                      <th key={h} className="h-5 border-r border-b border-r-[#dcdcdc] border-b-[#888] p-0 font-normal">{h}</th>
                    ))}
                  </tr>
                </thead>
                <tbody>
                  <tr>
                    <td className="h-[3px] bg-[#c0c0c0] p-0" />
                    <td className="border-r border-[#999] bg-[#f0f0f0] p-0" />
                    <td className="border-r border-[#999] bg-[#f0f0f0] p-0" />
                    <td className="border-r border-[#999] bg-[#f0f0f0] p-0" />
                    <td className="border-r border-[#999] bg-[#f0f0f0] p-0" />
                  </tr>
                </tbody>
              </table>
              <div className="flex flex-1 flex-col items-center justify-between bg-[#f0f0f0] py-1">
                <svg width="8" height="6" viewBox="0 0 8 6"><path d="M1 5l3-3.500L7 5" fill="none" stroke="#555" strokeWidth="1.800" /></svg>
                <svg width="8" height="6" viewBox="0 0 8 6"><path d="M1 1l3 3.500L7 1" fill="none" stroke="#555" strokeWidth="1.800" /></svg>
              </div>
            </div>
            <div className="flex flex-col gap-2 pt-1 pr-px">
              {layerButtons.map((b) => (
                <button key={b.label} aria-label={b.label} className="flex h-6 w-6 items-center justify-center border border-[#adadad] bg-[#e6e6e6]">
                  <svg width="18" height="18" viewBox="0 0 18 18">
                    <path d={b.line} fill="none" stroke="#444" strokeWidth="2" />
                    <path d={b.dot} fill="#444" />
                    <path d="M10.500 8.500h3v3h3v3h-3v3h-3v-3h-3v-3h3z" fill="#fff" stroke="#1ea51e" strokeWidth="1.200" />
                  </svg>
                </button>
              ))}
            </div>
          </div>
        </div>

        <div className="mt-1 mr-[5px] ml-1.5 h-[487px] flex-1 border border-t-2 border-l-2 border-[#e0e0e0] border-t-[#777] border-l-[#777]">
          <CrossSection />
        </div>
      </div>

      <div className="flex gap-2 pt-[7px] pr-[19px] pl-5">
        <PushButton className="h-[21px] w-[169px]">auf alle Abschnitte übertragen</PushButton>
        <button className="ml-auto h-[21px] w-[83px] border-2 border-[#0078d7] bg-[#e1e1e1] leading-[15px]">OK</button>
        <PushButton className="h-[21px] w-[83px]">Abbrechen</PushButton>
        <PushButton className="h-[21px] w-[83px]">Übernehmen</PushButton>
      </div>
      <svg width="9" height="9" viewBox="0 0 9 9" className="absolute right-0.5 bottom-0.5" fill="#bbb">
        <path d="M6 0h2v2H6zM6 3h2v2H6zM6 6h2v2H6zM3 3h2v2H3zM3 6h2v2H3zM0 6h2v2H0z" />
      </svg>
    </div>
  );
}

/* ---------- workspace ---------- */

const info = [
  "Einzelstütze mit auskragendem Ende",
  "als Ortbetonstütze",
  "C 30/37   B500A",
  "phi = 2,40 (via effektive Kriechzahl)",
  "Berechnungsmodus: Bemessung",
  "Brandwiderstand R90 (Heißbemessung)",
  "Optimierung: abschnittsweise",
  "Verformungen GZG: charakteristische Bemessungssituation",
];

const sheets = ["Stützenabschnitte", "Lager", "angehängte Pendelstützen", "Lasten", "benutzerdefinierte Einwirkungen"];

function Workspace() {
  return (
    <main className="ml-[3px] flex min-w-0 flex-1 flex-col text-[11px] text-black">
      <div className="flex h-[25px] shrink-0 items-end bg-[#bbcde6] pl-1.5">
        <button className="h-[22px] rounded-t-sm bg-[#f3f8fe] px-2 pb-0.5">Grafik</button>
        <button className="h-[22px] px-[7px] pb-0.5 pl-3.5">Dokument</button>
      </div>
      <div className="relative mr-px flex flex-1 flex-col justify-between border border-t-2 border-[#dcdcdc] border-t-[#6e6e6e] border-l-[#6e6e6e] bg-white px-[11px]">
        <div className="pt-px font-['Open_Sans',sans-serif] text-[12px] leading-[18px] whitespace-pre text-[#6e6e6e]">
          {info.map((line) => <p key={line}>{line}</p>)}
        </div>
        <p className="pb-2 font-['Open_Sans',sans-serif] text-[13px] leading-[18px] text-[#6e6e6e]">
          min Ncr/N = 11,71 in y- / 11,71 in z-Richtung
        </p>
        <ColumnView />
        <Results />
        <button aria-label="2D/3D" className="absolute top-1 right-1 h-6 w-6 border border-[#ddd] bg-[#f7f7f7]">
          <svg width="22" height="22" viewBox="0 0 22 22" fontFamily="Liberation Sans, sans-serif" fontSize="9" fontWeight="700" fill="#555">
            <path d="M5 19L18 3" stroke="#e8b060" />
            <text x="0" y="9">2D</text>
            <text x="10" y="19">3D</text>
          </svg>
        </button>
        <Dialog />
      </div>
      <div className="mt-1 flex h-[25px] shrink-0 items-end gap-2 border-b border-[#c0c0c0] bg-[#bbcde6] pl-1.5">
        {sheets.map((name, i) => (
          <button
            key={name}
            className={i === 0 ? "flex h-[21px] items-center rounded-t-sm bg-[#f3f8fe] pr-[9px] pl-[5px]" : "flex h-[21px] items-center pr-[9px] pl-[5px]"}
          >
            <svg width="15" height="13" viewBox="0 0 15 13" className="mr-[9px]">
              <rect x=".5" y=".5" width="14" height="12" fill="#f4f8fd" stroke="#8fa9d0" />
              <path d="M0 0h15v3.500H0z" fill="#5b86cf" />
              <path d="M1 6.500h13M1 9.500h13M4.500 4v8M8 4v8M11.500 4v8" stroke="#a9bcd9" />
            </svg>
            {name}
          </button>
        ))}
        <button aria-label="Schließen" className="mr-1 mb-2 ml-auto">
          <svg width="9" height="9" viewBox="0 0 9 9"><path d="M1 1l7 7M8 1L1 8" stroke="#000" strokeWidth="1.600" /></svg>
        </button>
      </div>
    </main>
  );
}

export default function App() {
  return (
    <div className="flex h-screen flex-col overflow-hidden bg-[#f3f2f1] font-['Liberation_Sans',Arial,sans-serif]">
      <TitleBar />
      <RibbonTabs />
      <Ribbon />
      <div className="flex min-h-0 flex-1">
        <Properties />
        <Workspace />
      </div>
      <footer className="h-[21px] shrink-0 bg-[#f3f2f1]" />
    </div>
  );
}
